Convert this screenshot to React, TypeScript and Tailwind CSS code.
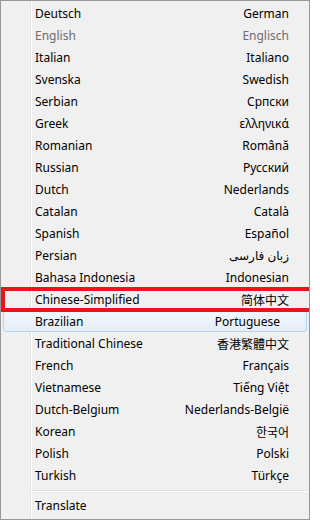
import React from "react";

type Item = { left: string; right: string; disabled?: boolean; hover?: boolean; rightFont?: string };

const items: Item[] = [
  { left: "Deutsch", right: "German" },
  { left: "English", right: "Englisch", disabled: true },
  { left: "Italian", right: "Italiano" },
  { left: "Svenska", right: "Swedish" },
  { left: "Serbian", right: "Српски" },
  { left: "Greek", right: "ελληνικά" },
  { left: "Romanian", right: "Română" },
  { left: "Russian", right: "Русский" },
  { left: "Dutch", right: "Nederlands" },
  { left: "Catalan", right: "Català" },
  { left: "Spanish", right: "Español" },
  { left: "Persian", right: "زبان فارسی" },
  { left: "Bahasa Indonesia", right: "Indonesian" },
  { left: "Chinese-Simplified", right: "简体中文", rightFont: "sc" },
  { left: "Brazilian", right: "Portuguese", hover: true },
  { left: "Traditional Chinese", right: "香港繁體中文", rightFont: "tc" },
  { left: "French", right: "Français" },
  { left: "Vietnamese", right: "Tiếng Việt" },
  { left: "Dutch-Belgium", right: "Nederlands-België" },
  { left: "Korean", right: "한국어", rightFont: "kr" },
  { left: "Polish", right: "Polski" },
  { left: "Turkish", right: "Türkçe" },
];

function rightFontClass(f?: string) {
  if (f === "sc") return "font-['Noto_Sans_CJK_SC',sans-serif]";
  if (f === "tc") return "font-['Noto_Sans_CJK_TC',sans-serif]";
  if (f === "kr") return "font-['Noto_Sans_CJK_KR',sans-serif]";
  return "";
}

function Row({ item }: { item: Item }) {
  const color = item.disabled ? "text-[#6d6d6d]" : "text-[#000]";
  if (item.hover) {
    return (
      <div className="h-[22px] px-[2px]">
        <div className="h-[22px] box-border rounded-[3px] border border-[#b4d3f8] bg-gradient-to-b from-[#f3f7fd] to-[#e4edf9] flex items-center justify-between pt-[2px] pl-[31px] pr-[26px]">
          <span className={color}>{item.left}</span>
          <span className={`${color} ${rightFontClass(item.rightFont)}`}>{item.right}</span>
        </div>
      </div>
    );
  }
  return (
    <div className="h-[22px] box-border flex items-center justify-between pt-[2px] pl-[34px] pr-[20px]">
      <span className={color}>{item.left}</span>
      <span className={`${color} ${rightFontClass(item.rightFont)}`}>{item.right}</span>
    </div>
  );
}

export default function App() {
  return (
    <div className="w-[310px] h-[520px] box-border relative overflow-hidden bg-[#f0f0f0] border border-[#979797] pt-[1px] text-[12px] leading-none font-['Noto_Sans','DejaVu_Sans','Noto_Sans_CJK_SC',sans-serif]">
      <div className="absolute left-[29px] top-0 bottom-0 w-[2px] border-l border-[#e2e3e3] bg-white" />
      <div className="relative flex flex-col">
        {items.map((it) => (
          <Row key={it.left} item={it} />
        ))}
        <div className="h-[8px] flex items-center pl-[30px] pt-[2px]">
          <div className="w-full h-[2px] border-t border-[#e2e3e3] bg-white" />
        </div>
        <div className="h-[22px] box-border flex items-center pt-[2px] pl-[34px] pr-[20px]">
          <span className="text-[#000]">Translate</span>
        </div>
      </div>
      <div className="absolute left-0 top-[286px] w-[320px] h-[25px] border-4 border-[#ea141d]" />
    </div>
  );
}
